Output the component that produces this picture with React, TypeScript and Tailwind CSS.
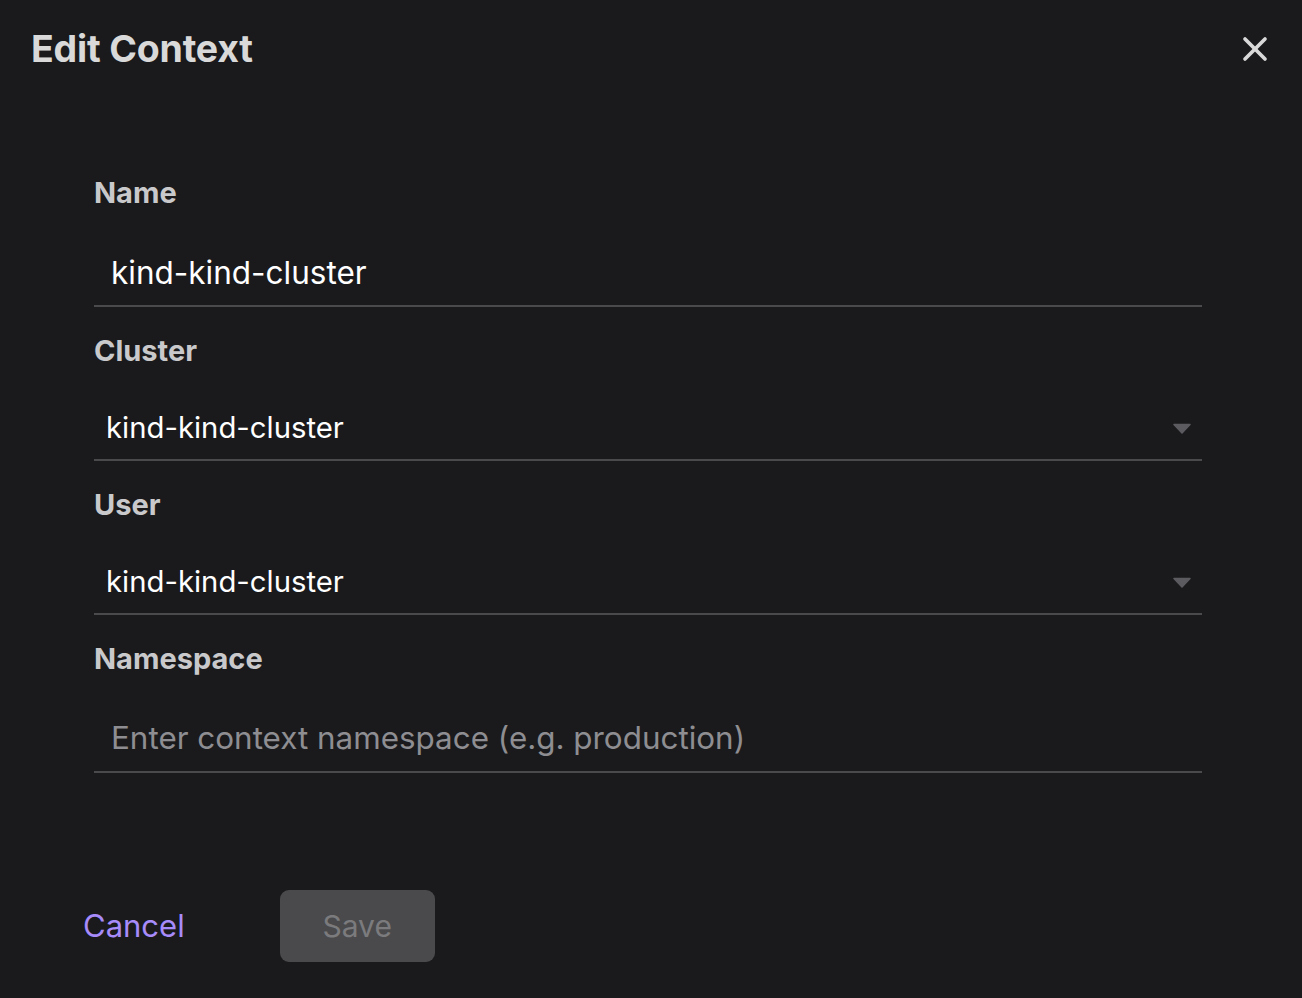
import { X } from 'lucide-react';

const font = { fontFamily: 'Inter, "Noto Sans", sans-serif' };

function Caret() {
  return (
    <svg width="18" height="11" viewBox="0 0 18 11" className="shrink-0">
      <path d="M1 1.5 H17 L9 10 Z" fill="#5b5b60" stroke="#5b5b60" strokeWidth="1.5" strokeLinejoin="round" />
    </svg>
  );
}

export default function App() {
  return (
    <div className="w-[1302px] h-[998px] bg-[#1a1a1c] text-[#d6d6d6] flex flex-col" style={font}>
      {/* Header */}
      <div className="flex items-center justify-between pl-[31px] pr-[27px] pt-[27px]">
        <h1 className="text-[37.5px] leading-[44px] font-bold text-[#d9d9d9] tracking-[-0.2px]">Edit Context</h1>
        <X className="w-[40px] h-[40px] text-[#d9d9d9]" strokeWidth={2.2} />
      </div>

      {/* Form */}
      <div className="flex flex-col gap-[28px] pl-[94px] pr-[100px] pt-[106px]">
        <div className="flex flex-col">
          <label className="text-[29px] leading-[32px] font-bold text-[#c9c9cb]">Name</label>
          <div className="pt-[48px] pb-[16px] pl-[17px] border-b-2 border-[#4a4a4d] text-[31.5px] leading-[32px] text-white">
            kind-kind-cluster
          </div>
        </div>

        <div className="flex flex-col">
          <label className="text-[29px] leading-[32px] font-bold text-[#c9c9cb]">Cluster</label>
          <div className="pt-[45px] pb-[15px] pl-[12px] pr-[11px] border-b-2 border-[#4a4a4d] flex items-center justify-between text-[29.3px] leading-[32px] text-white">
            <span>kind-kind-cluster</span>
            <Caret />
          </div>
        </div>

        <div className="flex flex-col">
          <label className="text-[29px] leading-[32px] font-bold text-[#c9c9cb]">User</label>
          <div className="pt-[45px] pb-[15px] pl-[12px] pr-[11px] border-b-2 border-[#4a4a4d] flex items-center justify-between text-[29.3px] leading-[32px] text-white">
            <span>kind-kind-cluster</span>
            <Caret />
          </div>
        </div>

        <div className="flex flex-col">
          <label className="text-[29px] leading-[32px] font-bold text-[#c9c9cb]">Namespace</label>
          <div className="pt-[47px] pb-[17px] pl-[17px] border-b-2 border-[#4a4a4d] text-[31.4px] leading-[32px] text-[#8e8e92]">
            Enter context namespace (e.g. production)
          </div>
        </div>
      </div>

      {/* Actions */}
      <div className="flex items-center pl-[83px] pt-[117px] gap-[95px]">
        <button className="text-[31px] leading-[40px] text-[#a78bfa]">Cancel</button>
        <button className="w-[155px] h-[72px] rounded-[9px] bg-[#4a4a4c] text-[30px] text-[#7b7b7e]">Save</button>
      </div>
    </div>
  );
}
